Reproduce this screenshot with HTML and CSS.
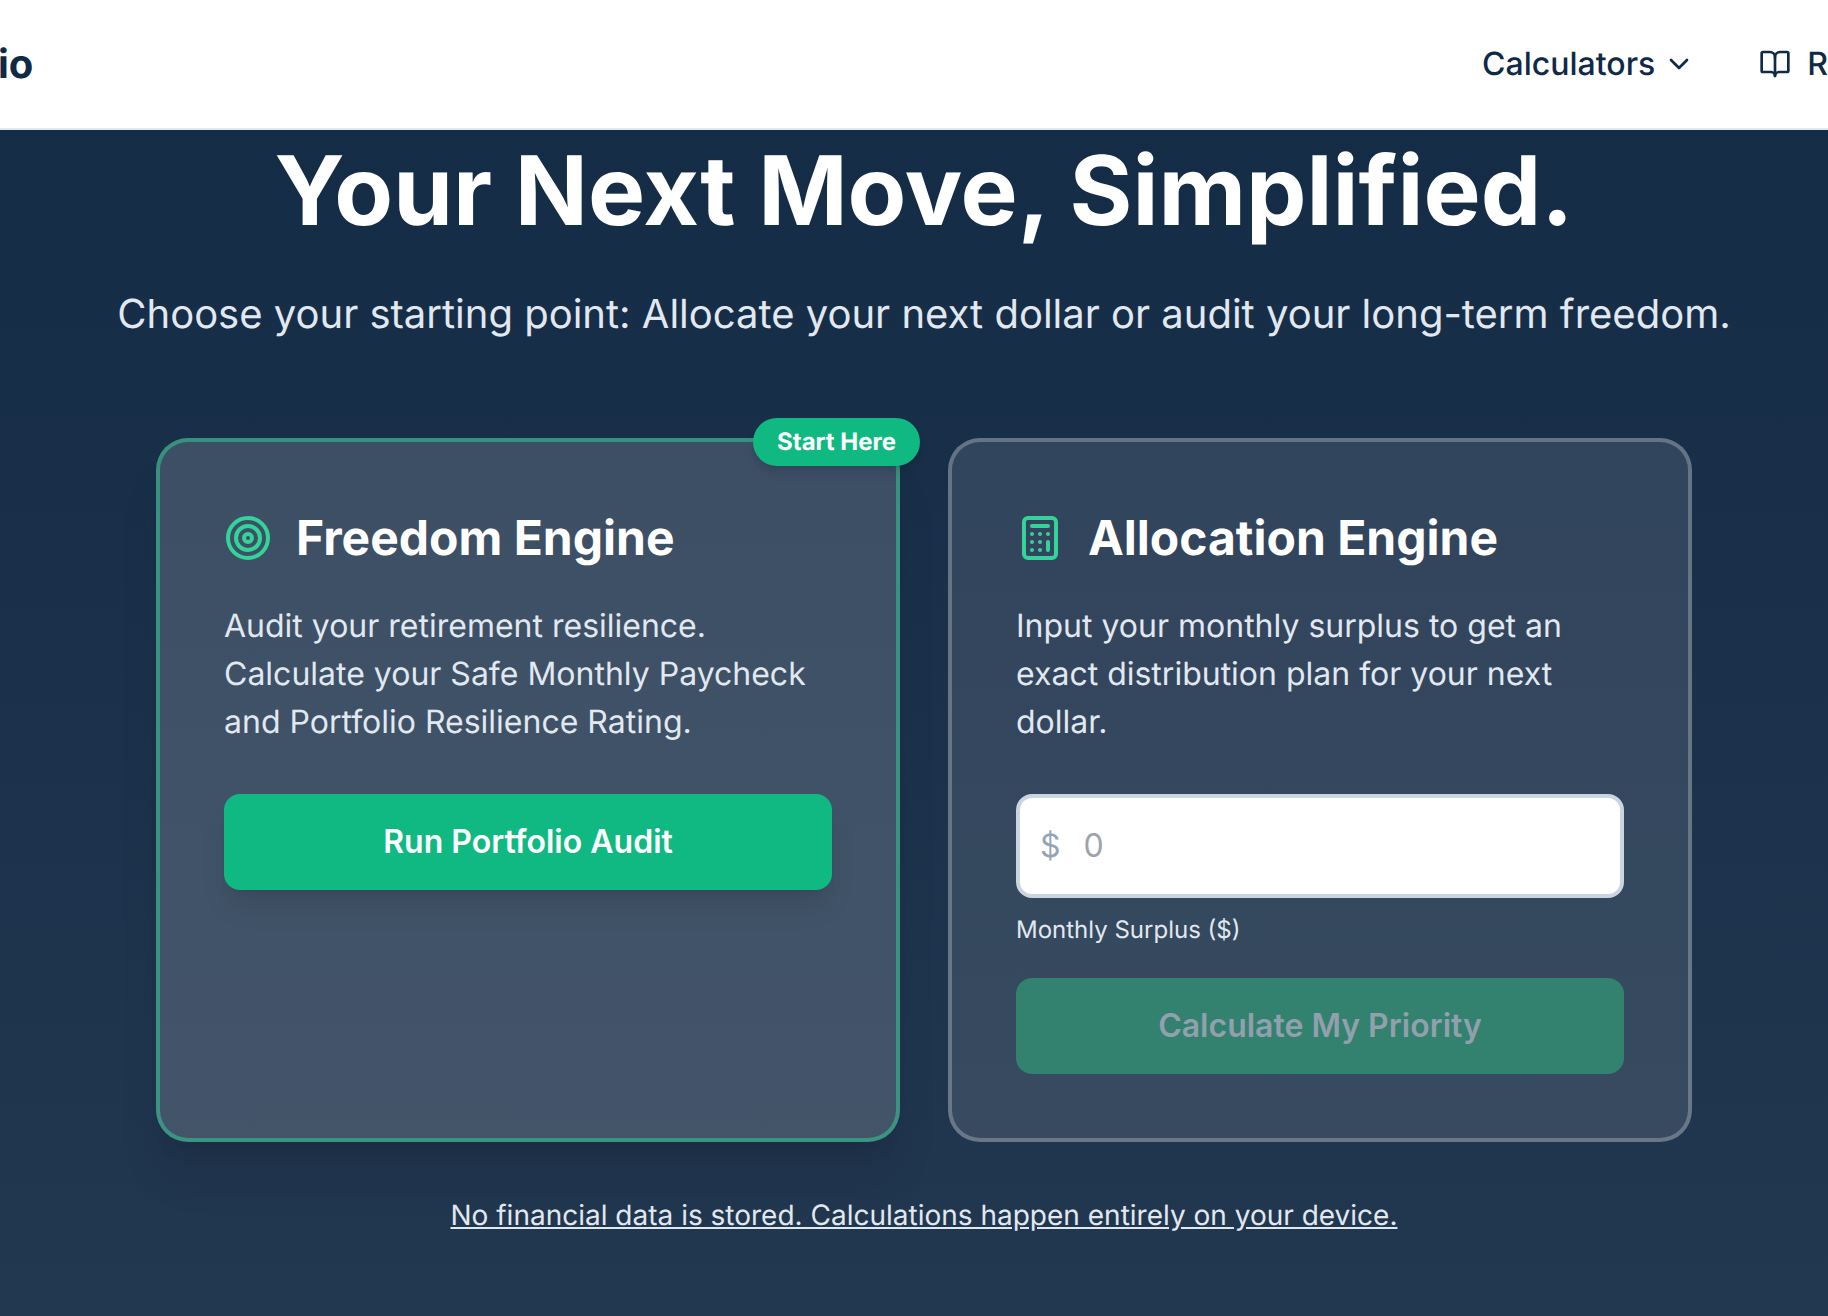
FILE: index.html
```html
<!DOCTYPE html>
<html lang="en">
<head>
<meta charset="utf-8">
<title>Your Next Move, Simplified.</title>
<link rel="stylesheet" href="styles.css">
</head>
<body>
<div class="page">
  <header class="topbar">
    <a class="logo">io</a>
    <nav class="nav">
      <a class="nav-item">Calculators
        <svg class="nav-icon" viewBox="0 0 24 24"><path d="m6 9 6 6 6-6"/></svg>
      </a>
      <a class="nav-item">
        <svg class="nav-icon" viewBox="0 0 24 24"><path d="M12 7v14"/><path d="M3 18a1 1 0 0 1-1-1V4a1 1 0 0 1 1-1h5a4 4 0 0 1 4 4 4 4 0 0 1 4-4h5a1 1 0 0 1 1 1v13a1 1 0 0 1-1 1h-6a3 3 0 0 0-3 3 3 3 0 0 0-3-3z"/></svg>
        R
      </a>
    </nav>
  </header>
  <main class="hero">
    <h1 class="hero-title">Your Next Move, Simplified.</h1>
    <p class="hero-sub">Choose your starting point: Allocate your next dollar or audit your long-term freedom.</p>
    <div class="cards">
      <section class="card card-primary">
        <span class="badge">Start Here</span>
        <div class="card-head">
          <svg class="card-icon" viewBox="0 0 24 24"><circle cx="12" cy="12" r="10"/><circle cx="12" cy="12" r="6"/><circle cx="12" cy="12" r="2"/></svg>
          <h2 class="card-title">Freedom Engine</h2>
        </div>
        <p class="card-text">Audit your retirement resilience. Calculate your Safe Monthly Paycheck and Portfolio Resilience Rating.</p>
        <button class="btn">Run Portfolio Audit</button>
      </section>
      <section class="card">
        <div class="card-head">
          <svg class="card-icon" viewBox="0 0 24 24"><rect x="4" y="2" width="16" height="20" rx="2"/><line x1="8" x2="16" y1="6" y2="6"/><line x1="16" x2="16" y1="14" y2="18"/><path d="M16 10h.01"/><path d="M12 10h.01"/><path d="M8 10h.01"/><path d="M12 14h.01"/><path d="M8 14h.01"/><path d="M12 18h.01"/><path d="M8 18h.01"/></svg>
          <h2 class="card-title">Allocation Engine</h2>
        </div>
        <p class="card-text">Input your monthly surplus to get an exact distribution plan for your next dollar.</p>
        <div class="field">
          <span class="field-prefix">$</span>
          <input class="field-input" type="text" placeholder="0" aria-label="Monthly Surplus ($)">
        </div>
        <label class="field-label">Monthly Surplus ($)</label>
        <button class="btn btn-disabled" disabled>Calculate My Priority</button>
      </section>
    </div>
    <a class="privacy">No financial data is stored. Calculations happen entirely on your device.</a>
  </main>
</div>
</body>
</html>
```
FILE: styles.css
```css
* { box-sizing: border-box; }
html, body { margin: 0; height: 100%; overflow: hidden; }
body {
  font-family: Inter, "Noto Sans", sans-serif;
  background: #223750;
  text-rendering: geometricPrecision;
  -webkit-font-smoothing: antialiased;
}
.page { width: 1848px; height: 1316px; display: flex; flex-direction: column; }
.topbar {
  width: 1828px;
  height: 130px;
  flex: none;
  display: flex;
  justify-content: space-between;
  align-items: center;
  background: #fff;
  border-bottom: 2px solid #e2e8f0;
  overflow: hidden;
}
.logo { font-size: 40px; line-height: 56px; font-weight: 700; color: #0f2a47; margin-left: -2px; }
.nav { display: flex; align-items: center; gap: 64px; }
.nav-item { display: flex; align-items: center; gap: 8px; font-size: 32px; line-height: 48px; font-weight: 500; color: #0f2a47; }
.nav-item:last-child { gap: 16px; }
.nav-icon { width: 32px; height: 32px; fill: none; stroke: currentColor; stroke-width: 2; stroke-linecap: round; stroke-linejoin: round; }
.hero {
  flex: 1;
  display: flex;
  flex-direction: column;
  align-items: center;
  padding-top: 13px;
  background: linear-gradient(180deg, #152c46 0%, #223750 100%);
}
.hero-title { margin: 0 0 47px; font-size: 96px; line-height: 96px; font-weight: 700; color: #fff; }
.hero-sub { margin: 0 0 96px; font-size: 40px; line-height: 56px; color: #e2e8f0; }
.cards { width: 1536px; display: grid; grid-template-columns: 1fr 1fr; gap: 48px; }
.card {
  position: relative;
  height: 704px;
  display: flex;
  flex-direction: column;
  padding: 64px;
  background: rgba(255, 255, 255, 0.105);
  border: 4px solid rgba(255, 255, 255, 0.25);
  border-radius: 32px;
}
.card-primary {
  background: rgba(255, 255, 255, 0.155);
  border-color: rgba(52, 211, 153, 0.5);
  box-shadow: 0 40px 50px -10px rgba(0, 0, 0, 0.1), 0 16px 20px -12px rgba(0, 0, 0, 0.1);
}
.badge {
  position: absolute;
  top: -24px;
  right: -24px;
  padding: 8px 24px;
  font-size: 24px;
  line-height: 32px;
  font-weight: 700;
  color: #fff;
  background: #10b981;
  border-radius: 999px;
  box-shadow: 0 8px 12px -2px rgba(0, 0, 0, 0.1), 0 4px 8px -4px rgba(0, 0, 0, 0.1);
}
.card-head { display: flex; align-items: center; gap: 24px; margin-bottom: 32px; }
.card-icon { width: 48px; height: 48px; flex: none; fill: none; stroke: #34d399; stroke-width: 2; stroke-linecap: round; stroke-linejoin: round; }
.card-title { margin: 0; font-size: 48px; line-height: 64px; font-weight: 700; color: #fff; }
.card-text { margin: 0 0 48px; font-size: 32px; line-height: 48px; color: #e2e8f0; }
.btn {
  width: 100%;
  height: 96px;
  flex: none;
  font: 600 32px/48px Inter, "Noto Sans", sans-serif;
  color: #fff;
  background: #10b981;
  border: 0;
  border-radius: 16px;
  box-shadow: 0 20px 30px -6px rgba(0, 0, 0, 0.1), 0 8px 12px -8px rgba(0, 0, 0, 0.1);
}
.btn-disabled { background: #338270; color: #929fad; box-shadow: none; }
.field {
  height: 104px;
  display: flex;
  align-items: center;
  gap: 23px;
  padding: 0 20px;
  background: #fff;
  border: 4px solid #cbd5e1;
  border-radius: 16px;
}
.field-prefix { font-size: 32px; line-height: 48px; color: #94a3b8; }
.field-input { flex: 1; min-width: 0; border: 0; padding: 0; outline: 0; background: transparent; font: 400 32px/48px Inter, "Noto Sans", sans-serif; color: #0f2a47; }
.field-input::placeholder { color: #9ca3af; opacity: 1; }
.field-label { display: block; margin: 16px 0 32px; font-size: 24px; line-height: 32px; color: #e2e8f0; }
.privacy { margin-top: 53px; font-size: 28px; line-height: 40px; color: #e2e8f0; text-decoration: underline; }
```
